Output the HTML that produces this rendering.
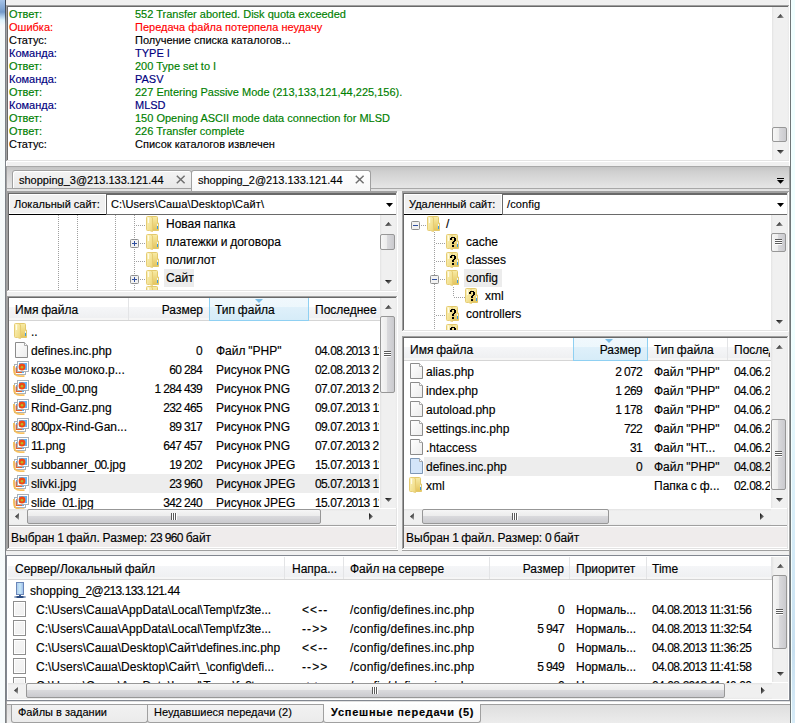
<!DOCTYPE html><html><head><meta charset="utf-8"><style>
html,body{margin:0;padding:0}
body{width:795px;height:723px;overflow:hidden;position:relative;background:#f0f0f0;font-family:"Liberation Sans",sans-serif}
body div,body svg{position:absolute}
.t{white-space:pre;-webkit-text-stroke:0.15px currentColor}
</style></head><body>
<svg style="left:0;top:0" width="0" height="0"><defs><linearGradient id="ga" x1="0" y1="0" x2="1" y2="1"><stop offset="0" stop-color="#000"/><stop offset="1" stop-color="#a8a8a8"/></linearGradient></defs></svg>
<svg style="left:0;top:0" width="0" height="0"><defs><linearGradient id="gfb" x1="0" y1="0" x2="0" y2="1"><stop offset="0" stop-color="#f8eca6"/><stop offset="1" stop-color="#e4c45c"/></linearGradient><linearGradient id="gff" x1="0" y1="0" x2="1" y2="1"><stop offset="0" stop-color="#fbf4c0"/><stop offset="1" stop-color="#eed678"/></linearGradient><linearGradient id="gfile" x1="0" y1="0" x2="1" y2="1"><stop offset="0" stop-color="#ffffff"/><stop offset="1" stop-color="#ececec"/></linearGradient></defs></svg>
<div style="left:0px;top:0px;width:5px;height:723px;background:linear-gradient(#a4c2e8 0px,#7299c9 12px,#a9c9e8 16px,#def4fb 20px,#f6fafa 26px,#f7fbfc 100%)"></div>
<div style="left:5px;top:0px;width:1px;height:723px;background:linear-gradient(#3c4656 0,#4a5462 16px,#7c8288 24px,#7e8286 100%)"></div>
<div style="left:789px;top:0px;width:1px;height:166px;background:#ffffff"></div>
<div style="left:789px;top:166px;width:1px;height:557px;background:#a0a0a0"></div>
<div style="left:6px;top:162px;width:1px;height:4px;background:#ffffff"></div>
<div style="left:790px;top:0px;width:1px;height:723px;background:#6e7678"></div>
<div style="left:791px;top:0px;width:1px;height:723px;background:#f4ffff"></div>
<div style="left:792px;top:0px;width:3px;height:723px;background:linear-gradient(#f0ffff 0,#f0ffff 330px,#d6ecf8 540px,#c8e0f0 650px,#d8ecf8 100%)"></div>
<div style="left:8px;top:7px;width:780px;height:153px;background:#fff"></div>
<div style="left:6px;top:5px;width:784px;height:1px;background:#a0a0a0"></div>
<div style="left:6px;top:5px;width:1px;height:157px;background:#a0a0a0"></div>
<div style="left:7px;top:6px;width:782px;height:1px;background:#696969"></div>
<div style="left:7px;top:6px;width:1px;height:155px;background:#696969"></div>
<div style="left:6px;top:161px;width:784px;height:1px;background:#ffffff"></div>
<div style="left:789px;top:5px;width:1px;height:157px;background:#ffffff"></div>
<div style="left:7px;top:160px;width:782px;height:1px;background:#e3e3e3"></div>
<div style="left:788px;top:6px;width:1px;height:155px;background:#e3e3e3"></div>
<div style="left:772px;top:7px;width:17px;height:153px;background:linear-gradient(90deg,#e3e3e3,#f0f0f0 2px,#f0f0f0 calc(100% - 2px),#eaeaea)"></div>
<svg style="left:777px;top:14px" width="7" height="4" viewBox="0 0 7 4"><path d="M0 4L3.5 0L7 4Z" fill="url(#ga)"/></svg>
<svg style="left:777px;top:150px" width="7" height="4" viewBox="0 0 7 4"><path d="M0 0L3.5 4L7 0Z" fill="url(#ga)"/></svg>
<div style="left:772px;top:127px;width:15px;height:15px;background:linear-gradient(90deg,#f6f6f6 0,#ebebeb 50%,#d9d9dc 50%,#cacace 100%);border:1px solid #979797;border-radius:2px;box-sizing:border-box"></div>
<div class="t" style="left:9px;top:8px;font-size:11px;line-height:13px;color:#008000;">Ответ:</div>
<div class="t" style="left:135px;top:8px;font-size:11px;line-height:13px;color:#008000;">552 Transfer aborted. Disk quota exceeded</div>
<div class="t" style="left:9px;top:21px;font-size:11px;line-height:13px;color:#ff0000;">Ошибка:</div>
<div class="t" style="left:135px;top:21px;font-size:11px;line-height:13px;color:#ff0000;">Передача файла потерпела неудачу</div>
<div class="t" style="left:9px;top:34px;font-size:11px;line-height:13px;color:#000000;">Статус:</div>
<div class="t" style="left:135px;top:34px;font-size:11px;line-height:13px;color:#000000;">Получение списка каталогов...</div>
<div class="t" style="left:9px;top:47px;font-size:11px;line-height:13px;color:#000080;">Команда:</div>
<div class="t" style="left:135px;top:47px;font-size:11px;line-height:13px;color:#000080;">TYPE I</div>
<div class="t" style="left:9px;top:60px;font-size:11px;line-height:13px;color:#008000;">Ответ:</div>
<div class="t" style="left:135px;top:60px;font-size:11px;line-height:13px;color:#008000;">200 Type set to I</div>
<div class="t" style="left:9px;top:73px;font-size:11px;line-height:13px;color:#000080;">Команда:</div>
<div class="t" style="left:135px;top:73px;font-size:11px;line-height:13px;color:#000080;">PASV</div>
<div class="t" style="left:9px;top:86px;font-size:11px;line-height:13px;color:#008000;">Ответ:</div>
<div class="t" style="left:135px;top:86px;font-size:11px;line-height:13px;color:#008000;">227 Entering Passive Mode (213,133,121,44,225,156).</div>
<div class="t" style="left:9px;top:99px;font-size:11px;line-height:13px;color:#000080;">Команда:</div>
<div class="t" style="left:135px;top:99px;font-size:11px;line-height:13px;color:#000080;">MLSD</div>
<div class="t" style="left:9px;top:112px;font-size:11px;line-height:13px;color:#008000;">Ответ:</div>
<div class="t" style="left:135px;top:112px;font-size:11px;line-height:13px;color:#008000;">150 Opening ASCII mode data connection for MLSD</div>
<div class="t" style="left:9px;top:125px;font-size:11px;line-height:13px;color:#008000;">Ответ:</div>
<div class="t" style="left:135px;top:125px;font-size:11px;line-height:13px;color:#008000;">226 Transfer complete</div>
<div class="t" style="left:9px;top:138px;font-size:11px;line-height:13px;color:#000000;">Статус:</div>
<div class="t" style="left:135px;top:138px;font-size:11px;line-height:13px;color:#000000;">Список каталогов извлечен</div>
<div style="left:6px;top:166px;width:784px;height:1px;background:#a8a8a8"></div>
<div style="left:6px;top:167px;width:783px;height:21px;background:linear-gradient(#c4c4c4,#d0d0d0 5px,#e6e6e6 100%)"></div>
<div style="left:6px;top:166px;width:1px;height:25px;background:#a0a0a0"></div>
<div style="left:7px;top:188px;width:782px;height:1px;background:#a8a8a8"></div>
<div style="left:7px;top:189px;width:782px;height:2px;background:#e2e2e2"></div>
<div style="left:12px;top:170px;width:180px;height:19px;background:linear-gradient(#f4f4f4,#e8e8e8);border:1px solid #a0a0a0;border-radius:3px 3px 0 0;box-sizing:border-box;box-shadow:inset 1px 1px 0 #fff"></div>
<div class="t" style="left:19px;top:174px;font-size:11px;line-height:13px;color:#000;">shopping_3@213.133.121.44</div>
<div style="left:191px;top:170px;width:180px;height:21px;background:linear-gradient(#ffffff,#f8f8f8);border:1px solid #a0a0a0;border-bottom:none;border-radius:3px 3px 0 0;box-sizing:border-box"></div>
<div class="t" style="left:198px;top:174px;font-size:11px;line-height:13px;color:#000;">shopping_2@213.133.121.44</div>
<svg style="left:176px;top:175px" width="10" height="9" viewBox="0 0 10 9"><path d="M0.8 0.8L8.6 8.2M8.6 0.8L0.8 8.2" stroke="#707070" stroke-width="1.5"/></svg>
<svg style="left:355px;top:175px" width="10" height="9" viewBox="0 0 10 9"><path d="M0.8 0.8L8.6 8.2M8.6 0.8L0.8 8.2" stroke="#707070" stroke-width="1.5"/></svg>
<svg style="left:777px;top:178px" width="7" height="7" viewBox="0 0 7 7"><path d="M0 0.5H7" stroke="#000" stroke-width="1"/><path d="M0 2H7L3.5 5.8Z" fill="#000"/></svg>
<div style="left:6px;top:191px;width:1px;height:360px;background:#a0a0a0"></div>
<div style="left:6px;top:191px;width:391px;height:1px;background:#a0a0a0"></div>
<div style="left:6px;top:550px;width:392px;height:1px;background:#a0a0a0"></div>
<div style="left:9px;top:194px;width:387px;height:96px;background:#fff"></div>
<div style="left:7px;top:192px;width:391px;height:1px;background:#a0a0a0"></div>
<div style="left:7px;top:192px;width:1px;height:100px;background:#a0a0a0"></div>
<div style="left:8px;top:193px;width:389px;height:1px;background:#696969"></div>
<div style="left:8px;top:193px;width:1px;height:98px;background:#696969"></div>
<div style="left:7px;top:291px;width:391px;height:1px;background:#ffffff"></div>
<div style="left:397px;top:192px;width:1px;height:100px;background:#ffffff"></div>
<div style="left:8px;top:290px;width:389px;height:1px;background:#e3e3e3"></div>
<div style="left:396px;top:193px;width:1px;height:98px;background:#e3e3e3"></div>
<div style="left:9px;top:194px;width:97px;height:20px;background:#f0f0f0;box-shadow:inset 1px 1px 0 #fff,inset -1px -1px 0 #fff"></div>
<div style="left:106px;top:194px;width:1px;height:21px;background:#696969"></div>
<div style="left:9px;top:214px;width:97px;height:1px;background:#000"></div>
<div class="t" style="left:14px;top:198px;font-size:11px;line-height:13px;color:#000;">Локальный сайт:</div>
<div style="left:107px;top:194px;width:289px;height:1px;background:#696969"></div>
<div style="left:107px;top:195px;width:289px;height:19px;background:#fff"></div>
<div style="left:107px;top:214px;width:289px;height:1px;background:#6a6a6a"></div>
<div class="t" style="left:111px;top:198px;font-size:11px;line-height:13px;color:#000;letter-spacing:0.12px;">C:\Users\Саша\Desktop\Сайт\</div>
<svg style="left:386px;top:203px" width="7" height="4" viewBox="0 0 7 4"><path d="M0 0H7L3.5 4Z" fill="#000"/></svg>
<div style="left:58px;top:215px;width:1px;height:75px;background:repeating-linear-gradient(#a0a0a0 0 1px,transparent 1px 2px)"></div>
<div style="left:77px;top:215px;width:1px;height:75px;background:repeating-linear-gradient(#a0a0a0 0 1px,transparent 1px 2px)"></div>
<div style="left:115px;top:215px;width:1px;height:75px;background:repeating-linear-gradient(#a0a0a0 0 1px,transparent 1px 2px)"></div>
<div style="left:134px;top:215px;width:1px;height:75px;background:repeating-linear-gradient(#a0a0a0 0 1px,transparent 1px 2px)"></div>
<div style="left:136px;top:225px;width:10px;height:1px;background:repeating-linear-gradient(90deg,#a0a0a0 0 1px,transparent 1px 2px)"></div>
<svg style="left:146px;top:216px" width="14" height="16" viewBox="0 0 14 16"><path d="M5 0.5H10.5Q11.5 0.5 11.5 1.5V7H12.5V14.5H6Z" fill="url(#gfb)" stroke="#e2c86c" stroke-width="1"/><path d="M0.5 1.5Q0.5 0.5 1.5 0.5H5L6.5 2V15.5L3.5 14.5H1.5Q0.5 14.5 0.5 13.5Z" fill="url(#gff)" stroke="#e6cc74" stroke-width="1"/><path d="M2.5 1.5V7" stroke="#fffbe8" stroke-width="1.2"/><rect x="11" y="8" width="1" height="2" fill="#eef4fa"/><rect x="11" y="10" width="1" height="3" fill="#3c9ae0"/></svg>
<div class="t" style="left:166px;top:216px;font-size:12px;line-height:16px;color:#000;">Новая<span style="letter-spacing:-0.5px"> </span>папка</div>
<div style="left:136px;top:243px;width:10px;height:1px;background:repeating-linear-gradient(90deg,#a0a0a0 0 1px,transparent 1px 2px)"></div>
<svg style="left:130px;top:239px" width="9" height="9" viewBox="0 0 9 9"><rect x="0.5" y="0.5" width="8" height="8" rx="1" fill="#f2f2f2" stroke="#8e8f8f" stroke-width="1"/><path d="M2 4.5H7" stroke="#2f4f9f" stroke-width="1"/><path d="M4.5 2V7" stroke="#2f4f9f" stroke-width="1"/></svg>
<svg style="left:146px;top:234px" width="14" height="16" viewBox="0 0 14 16"><path d="M5 0.5H10.5Q11.5 0.5 11.5 1.5V7H12.5V14.5H6Z" fill="url(#gfb)" stroke="#e2c86c" stroke-width="1"/><path d="M0.5 1.5Q0.5 0.5 1.5 0.5H5L6.5 2V15.5L3.5 14.5H1.5Q0.5 14.5 0.5 13.5Z" fill="url(#gff)" stroke="#e6cc74" stroke-width="1"/><path d="M2.5 1.5V7" stroke="#fffbe8" stroke-width="1.2"/><rect x="11" y="8" width="1" height="2" fill="#eef4fa"/><rect x="11" y="10" width="1" height="3" fill="#3c9ae0"/></svg>
<div class="t" style="left:166px;top:234px;font-size:12px;line-height:16px;color:#000;">платежки<span style="letter-spacing:-0.5px"> </span>и<span style="letter-spacing:-0.5px"> </span>договора</div>
<div style="left:136px;top:261px;width:10px;height:1px;background:repeating-linear-gradient(90deg,#a0a0a0 0 1px,transparent 1px 2px)"></div>
<svg style="left:146px;top:252px" width="14" height="16" viewBox="0 0 14 16"><path d="M5 0.5H10.5Q11.5 0.5 11.5 1.5V7H12.5V14.5H6Z" fill="url(#gfb)" stroke="#e2c86c" stroke-width="1"/><path d="M0.5 1.5Q0.5 0.5 1.5 0.5H5L6.5 2V15.5L3.5 14.5H1.5Q0.5 14.5 0.5 13.5Z" fill="url(#gff)" stroke="#e6cc74" stroke-width="1"/><path d="M2.5 1.5V7" stroke="#fffbe8" stroke-width="1.2"/><rect x="11" y="8" width="1" height="2" fill="#eef4fa"/><rect x="11" y="10" width="1" height="3" fill="#3c9ae0"/></svg>
<div class="t" style="left:166px;top:252px;font-size:12px;line-height:16px;color:#000;">полиглот</div>
<div style="left:136px;top:279px;width:10px;height:1px;background:repeating-linear-gradient(90deg,#a0a0a0 0 1px,transparent 1px 2px)"></div>
<svg style="left:130px;top:275px" width="9" height="9" viewBox="0 0 9 9"><rect x="0.5" y="0.5" width="8" height="8" rx="1" fill="#f2f2f2" stroke="#8e8f8f" stroke-width="1"/><path d="M2 4.5H7" stroke="#2f4f9f" stroke-width="1"/><path d="M4.5 2V7" stroke="#2f4f9f" stroke-width="1"/></svg>
<div style="left:164px;top:269px;width:30px;height:18px;background:#ececec"></div>
<svg style="left:146px;top:270px" width="14" height="16" viewBox="0 0 14 16"><path d="M5 0.5H10.5Q11.5 0.5 11.5 1.5V7H12.5V14.5H6Z" fill="url(#gfb)" stroke="#e2c86c" stroke-width="1"/><path d="M0.5 1.5Q0.5 0.5 1.5 0.5H5L6.5 2V15.5L3.5 14.5H1.5Q0.5 14.5 0.5 13.5Z" fill="url(#gff)" stroke="#e6cc74" stroke-width="1"/><path d="M2.5 1.5V7" stroke="#fffbe8" stroke-width="1.2"/><rect x="11" y="8" width="1" height="2" fill="#eef4fa"/><rect x="11" y="10" width="1" height="3" fill="#3c9ae0"/></svg>
<div class="t" style="left:166px;top:270px;font-size:12px;line-height:16px;color:#000;">Сайт</div>
<div style="left:0px;top:0px;width:795px;height:290px;overflow:hidden">
<svg style="left:146px;top:286px" width="14" height="16" viewBox="0 0 14 16"><path d="M5 0.5H10.5Q11.5 0.5 11.5 1.5V7H12.5V14.5H6Z" fill="url(#gfb)" stroke="#e2c86c" stroke-width="1"/><path d="M0.5 1.5Q0.5 0.5 1.5 0.5H5L6.5 2V15.5L3.5 14.5H1.5Q0.5 14.5 0.5 13.5Z" fill="url(#gff)" stroke="#e6cc74" stroke-width="1"/><path d="M2.5 1.5V7" stroke="#fffbe8" stroke-width="1.2"/><rect x="11" y="8" width="1" height="2" fill="#eef4fa"/><rect x="11" y="10" width="1" height="3" fill="#3c9ae0"/></svg>
</div>
<div style="left:9px;top:290px;width:387px;height:1px;background:#e3e3e3"></div>
<div style="left:380px;top:215px;width:17px;height:75px;background:linear-gradient(90deg,#e3e3e3,#f0f0f0 2px,#f0f0f0 calc(100% - 2px),#eaeaea)"></div>
<svg style="left:385px;top:222px" width="7" height="4" viewBox="0 0 7 4"><path d="M0 4L3.5 0L7 4Z" fill="url(#ga)"/></svg>
<svg style="left:385px;top:280px" width="7" height="4" viewBox="0 0 7 4"><path d="M0 0L3.5 4L7 0Z" fill="url(#ga)"/></svg>
<div style="left:380px;top:234px;width:15px;height:16px;background:linear-gradient(90deg,#f6f6f6 0,#ebebeb 50%,#d9d9dc 50%,#cacace 100%);border:1px solid #979797;border-radius:2px;box-sizing:border-box"></div>
<div style="left:7px;top:292px;width:391px;height:4px;background:#f0f0f0"></div>
<div style="left:9px;top:298px;width:387px;height:250px;background:#fff"></div>
<div style="left:7px;top:296px;width:391px;height:1px;background:#a0a0a0"></div>
<div style="left:7px;top:296px;width:1px;height:254px;background:#a0a0a0"></div>
<div style="left:8px;top:297px;width:389px;height:1px;background:#696969"></div>
<div style="left:8px;top:297px;width:1px;height:252px;background:#696969"></div>
<div style="left:7px;top:549px;width:391px;height:1px;background:#ffffff"></div>
<div style="left:397px;top:296px;width:1px;height:254px;background:#ffffff"></div>
<div style="left:8px;top:548px;width:389px;height:1px;background:#e3e3e3"></div>
<div style="left:396px;top:297px;width:1px;height:252px;background:#e3e3e3"></div>
<div style="left:9px;top:298px;width:371px;height:23px;background:linear-gradient(#ffffff 0,#ffffff 9px,#f5f6f8 9px,#eff0f2 calc(100% - 2px),#f6f6f6 calc(100% - 2px));border-bottom:1px solid #d5d5d5;box-sizing:border-box"></div>
<div style="left:209px;top:298px;width:100px;height:23px;background:linear-gradient(#f0f8fd 0,#edf7fc 9px,#dff0fa 9px,#d6ecf8 100%);border:1px solid #8fd0f2;border-top:none;box-sizing:border-box"></div>
<div style="left:128px;top:298px;width:1px;height:22px;background:#e3e4e6"></div>
<svg style="left:255px;top:299px" width="8" height="4" viewBox="0 0 8 4"><path d="M0 0H8L4 4Z" fill="#7cbde6"/></svg>
<div class="t" style="left:15px;top:302px;font-size:12px;line-height:16px;color:#000;">Имя<span style="letter-spacing:-0.5px"> </span>файла</div>
<div class="t" style="left:-97px;width:300px;text-align:right;top:302px;font-size:12px;line-height:16px;color:#000;">Размер</div>
<div class="t" style="left:215px;top:302px;font-size:12px;line-height:16px;color:#000;">Тип<span style="letter-spacing:-0.5px"> </span>файла</div>
<div class="t" style="left:315px;top:302px;font-size:12px;line-height:16px;color:#000;width:64px;overflow:hidden;">Последнее</div>
<svg style="left:14px;top:323px" width="14" height="16" viewBox="0 0 14 16"><path d="M5 0.5H10.5Q11.5 0.5 11.5 1.5V7H12.5V14.5H6Z" fill="url(#gfb)" stroke="#e2c86c" stroke-width="1"/><path d="M0.5 1.5Q0.5 0.5 1.5 0.5H5L6.5 2V15.5L3.5 14.5H1.5Q0.5 14.5 0.5 13.5Z" fill="url(#gff)" stroke="#e6cc74" stroke-width="1"/><path d="M2.5 1.5V7" stroke="#fffbe8" stroke-width="1.2"/><rect x="11" y="8" width="1" height="2" fill="#eef4fa"/><rect x="11" y="10" width="1" height="3" fill="#3c9ae0"/></svg>
<div class="t" style="left:31px;top:324px;font-size:12px;line-height:16px;color:#000;">..</div>
<svg style="left:15px;top:342px" width="13" height="16" viewBox="0 0 13 16"><path d="M0.5 0.5H9.5L12.5 3.5V15.5H0.5Z" fill="url(#gfile)" stroke="#8c8c8c" stroke-width="1"/><path d="M9.5 0.5V3.5H12.5" fill="#fff" stroke="#a8a8a8" stroke-width="1"/></svg>
<div class="t" style="left:31px;top:343px;font-size:12px;line-height:16px;color:#000;">defines.inc.php</div>
<div class="t" style="left:-98px;width:300px;text-align:right;top:343px;font-size:12px;line-height:16px;color:#000;"><span style="letter-spacing:-0.7px">0</span></div>
<div class="t" style="left:216px;top:343px;font-size:12px;line-height:16px;color:#000;">Файл<span style="letter-spacing:-0.5px"> </span>"PHP"</div>
<div class="t" style="left:315px;top:343px;font-size:12px;line-height:16px;color:#000;width:64px;overflow:hidden;"><span style="letter-spacing:-0.7px">0</span><span style="letter-spacing:-0.7px">4</span>.<span style="letter-spacing:-0.7px">0</span><span style="letter-spacing:-0.7px">8</span>.<span style="letter-spacing:-0.7px">2</span><span style="letter-spacing:-0.7px">0</span><span style="letter-spacing:-0.7px">1</span><span style="letter-spacing:-0.7px">3</span><span style="letter-spacing:-0.5px"> </span><span style="letter-spacing:-0.7px">1</span><span style="letter-spacing:-0.7px">1</span>:<span style="letter-spacing:-0.7px">3</span><span style="letter-spacing:-0.7px">1</span></div>
<svg style="left:13px;top:361px" width="16" height="17" viewBox="0 0 16 17"><rect x="1.5" y="3.5" width="11" height="10" fill="#fff" stroke="#aab1b8" stroke-width="1"/><rect x="3" y="5" width="8" height="7" fill="#5caaf0"/><path d="M3.2 6.5V11.5H9" fill="none" stroke="#e8602a" stroke-width="1.2"/><rect x="4.5" y="0.5" width="11" height="10" fill="#fff" stroke="#aab1b8" stroke-width="1"/><rect x="6" y="2" width="8" height="7" fill="#66b2f4"/><circle cx="9" cy="6" r="3.4" fill="#f04a14"/><circle cx="9" cy="6.3" r="1.3" fill="#b8b828"/><path d="M0.9 5V9Q0.9 15.1 7 15.1H11.5" fill="none" stroke="#f8bb50" stroke-width="1.8" opacity="0.9"/></svg>
<div class="t" style="left:31px;top:362px;font-size:12px;line-height:16px;color:#000;">козье<span style="letter-spacing:-0.5px"> </span>молоко.p...</div>
<div class="t" style="left:-98px;width:300px;text-align:right;top:362px;font-size:12px;line-height:16px;color:#000;"><span style="letter-spacing:-0.7px">6</span><span style="letter-spacing:-0.7px">0</span><span style="letter-spacing:-0.5px"> </span><span style="letter-spacing:-0.7px">2</span><span style="letter-spacing:-0.7px">8</span><span style="letter-spacing:-0.7px">4</span></div>
<div class="t" style="left:216px;top:362px;font-size:12px;line-height:16px;color:#000;">Рисунок<span style="letter-spacing:-0.5px"> </span>PNG</div>
<div class="t" style="left:315px;top:362px;font-size:12px;line-height:16px;color:#000;width:64px;overflow:hidden;"><span style="letter-spacing:-0.7px">0</span><span style="letter-spacing:-0.7px">2</span>.<span style="letter-spacing:-0.7px">0</span><span style="letter-spacing:-0.7px">8</span>.<span style="letter-spacing:-0.7px">2</span><span style="letter-spacing:-0.7px">0</span><span style="letter-spacing:-0.7px">1</span><span style="letter-spacing:-0.7px">3</span><span style="letter-spacing:-0.5px"> </span><span style="letter-spacing:-0.7px">2</span><span style="letter-spacing:-0.7px">1</span>:<span style="letter-spacing:-0.7px">3</span><span style="letter-spacing:-0.7px">1</span></div>
<svg style="left:13px;top:380px" width="16" height="17" viewBox="0 0 16 17"><rect x="1.5" y="3.5" width="11" height="10" fill="#fff" stroke="#aab1b8" stroke-width="1"/><rect x="3" y="5" width="8" height="7" fill="#5caaf0"/><path d="M3.2 6.5V11.5H9" fill="none" stroke="#e8602a" stroke-width="1.2"/><rect x="4.5" y="0.5" width="11" height="10" fill="#fff" stroke="#aab1b8" stroke-width="1"/><rect x="6" y="2" width="8" height="7" fill="#66b2f4"/><circle cx="9" cy="6" r="3.4" fill="#f04a14"/><circle cx="9" cy="6.3" r="1.3" fill="#b8b828"/><path d="M0.9 5V9Q0.9 15.1 7 15.1H11.5" fill="none" stroke="#f8bb50" stroke-width="1.8" opacity="0.9"/></svg>
<div class="t" style="left:31px;top:381px;font-size:12px;line-height:16px;color:#000;">slide_<span style="letter-spacing:-0.7px">0</span><span style="letter-spacing:-0.7px">0</span>.png</div>
<div class="t" style="left:-98px;width:300px;text-align:right;top:381px;font-size:12px;line-height:16px;color:#000;"><span style="letter-spacing:-0.7px">1</span><span style="letter-spacing:-0.5px"> </span><span style="letter-spacing:-0.7px">2</span><span style="letter-spacing:-0.7px">8</span><span style="letter-spacing:-0.7px">4</span><span style="letter-spacing:-0.5px"> </span><span style="letter-spacing:-0.7px">4</span><span style="letter-spacing:-0.7px">3</span><span style="letter-spacing:-0.7px">9</span></div>
<div class="t" style="left:216px;top:381px;font-size:12px;line-height:16px;color:#000;">Рисунок<span style="letter-spacing:-0.5px"> </span>PNG</div>
<div class="t" style="left:315px;top:381px;font-size:12px;line-height:16px;color:#000;width:64px;overflow:hidden;"><span style="letter-spacing:-0.7px">0</span><span style="letter-spacing:-0.7px">7</span>.<span style="letter-spacing:-0.7px">0</span><span style="letter-spacing:-0.7px">7</span>.<span style="letter-spacing:-0.7px">2</span><span style="letter-spacing:-0.7px">0</span><span style="letter-spacing:-0.7px">1</span><span style="letter-spacing:-0.7px">3</span><span style="letter-spacing:-0.5px"> </span><span style="letter-spacing:-0.7px">2</span><span style="letter-spacing:-0.7px">1</span>:<span style="letter-spacing:-0.7px">3</span><span style="letter-spacing:-0.7px">1</span></div>
<svg style="left:13px;top:399px" width="16" height="17" viewBox="0 0 16 17"><rect x="1.5" y="3.5" width="11" height="10" fill="#fff" stroke="#aab1b8" stroke-width="1"/><rect x="3" y="5" width="8" height="7" fill="#5caaf0"/><path d="M3.2 6.5V11.5H9" fill="none" stroke="#e8602a" stroke-width="1.2"/><rect x="4.5" y="0.5" width="11" height="10" fill="#fff" stroke="#aab1b8" stroke-width="1"/><rect x="6" y="2" width="8" height="7" fill="#66b2f4"/><circle cx="9" cy="6" r="3.4" fill="#f04a14"/><circle cx="9" cy="6.3" r="1.3" fill="#b8b828"/><path d="M0.9 5V9Q0.9 15.1 7 15.1H11.5" fill="none" stroke="#f8bb50" stroke-width="1.8" opacity="0.9"/></svg>
<div class="t" style="left:31px;top:400px;font-size:12px;line-height:16px;color:#000;">Rind-Ganz.png</div>
<div class="t" style="left:-98px;width:300px;text-align:right;top:400px;font-size:12px;line-height:16px;color:#000;"><span style="letter-spacing:-0.7px">2</span><span style="letter-spacing:-0.7px">3</span><span style="letter-spacing:-0.7px">2</span><span style="letter-spacing:-0.5px"> </span><span style="letter-spacing:-0.7px">4</span><span style="letter-spacing:-0.7px">6</span><span style="letter-spacing:-0.7px">5</span></div>
<div class="t" style="left:216px;top:400px;font-size:12px;line-height:16px;color:#000;">Рисунок<span style="letter-spacing:-0.5px"> </span>PNG</div>
<div class="t" style="left:315px;top:400px;font-size:12px;line-height:16px;color:#000;width:64px;overflow:hidden;"><span style="letter-spacing:-0.7px">0</span><span style="letter-spacing:-0.7px">9</span>.<span style="letter-spacing:-0.7px">0</span><span style="letter-spacing:-0.7px">7</span>.<span style="letter-spacing:-0.7px">2</span><span style="letter-spacing:-0.7px">0</span><span style="letter-spacing:-0.7px">1</span><span style="letter-spacing:-0.7px">3</span><span style="letter-spacing:-0.5px"> </span><span style="letter-spacing:-0.7px">1</span><span style="letter-spacing:-0.7px">1</span>:<span style="letter-spacing:-0.7px">3</span><span style="letter-spacing:-0.7px">1</span></div>
<svg style="left:13px;top:418px" width="16" height="17" viewBox="0 0 16 17"><rect x="1.5" y="3.5" width="11" height="10" fill="#fff" stroke="#aab1b8" stroke-width="1"/><rect x="3" y="5" width="8" height="7" fill="#5caaf0"/><path d="M3.2 6.5V11.5H9" fill="none" stroke="#e8602a" stroke-width="1.2"/><rect x="4.5" y="0.5" width="11" height="10" fill="#fff" stroke="#aab1b8" stroke-width="1"/><rect x="6" y="2" width="8" height="7" fill="#66b2f4"/><circle cx="9" cy="6" r="3.4" fill="#f04a14"/><circle cx="9" cy="6.3" r="1.3" fill="#b8b828"/><path d="M0.9 5V9Q0.9 15.1 7 15.1H11.5" fill="none" stroke="#f8bb50" stroke-width="1.8" opacity="0.9"/></svg>
<div class="t" style="left:31px;top:419px;font-size:12px;line-height:16px;color:#000;"><span style="letter-spacing:-0.7px">8</span><span style="letter-spacing:-0.7px">0</span><span style="letter-spacing:-0.7px">0</span>px-Rind-Gan...</div>
<div class="t" style="left:-98px;width:300px;text-align:right;top:419px;font-size:12px;line-height:16px;color:#000;"><span style="letter-spacing:-0.7px">8</span><span style="letter-spacing:-0.7px">9</span><span style="letter-spacing:-0.5px"> </span><span style="letter-spacing:-0.7px">3</span><span style="letter-spacing:-0.7px">1</span><span style="letter-spacing:-0.7px">7</span></div>
<div class="t" style="left:216px;top:419px;font-size:12px;line-height:16px;color:#000;">Рисунок<span style="letter-spacing:-0.5px"> </span>PNG</div>
<div class="t" style="left:315px;top:419px;font-size:12px;line-height:16px;color:#000;width:64px;overflow:hidden;"><span style="letter-spacing:-0.7px">0</span><span style="letter-spacing:-0.7px">9</span>.<span style="letter-spacing:-0.7px">0</span><span style="letter-spacing:-0.7px">7</span>.<span style="letter-spacing:-0.7px">2</span><span style="letter-spacing:-0.7px">0</span><span style="letter-spacing:-0.7px">1</span><span style="letter-spacing:-0.7px">3</span><span style="letter-spacing:-0.5px"> </span><span style="letter-spacing:-0.7px">1</span><span style="letter-spacing:-0.7px">1</span>:<span style="letter-spacing:-0.7px">3</span><span style="letter-spacing:-0.7px">1</span></div>
<svg style="left:13px;top:437px" width="16" height="17" viewBox="0 0 16 17"><rect x="1.5" y="3.5" width="11" height="10" fill="#fff" stroke="#aab1b8" stroke-width="1"/><rect x="3" y="5" width="8" height="7" fill="#5caaf0"/><path d="M3.2 6.5V11.5H9" fill="none" stroke="#e8602a" stroke-width="1.2"/><rect x="4.5" y="0.5" width="11" height="10" fill="#fff" stroke="#aab1b8" stroke-width="1"/><rect x="6" y="2" width="8" height="7" fill="#66b2f4"/><circle cx="9" cy="6" r="3.4" fill="#f04a14"/><circle cx="9" cy="6.3" r="1.3" fill="#b8b828"/><path d="M0.9 5V9Q0.9 15.1 7 15.1H11.5" fill="none" stroke="#f8bb50" stroke-width="1.8" opacity="0.9"/></svg>
<div class="t" style="left:31px;top:438px;font-size:12px;line-height:16px;color:#000;"><span style="letter-spacing:-0.7px">1</span><span style="letter-spacing:-0.7px">1</span>.png</div>
<div class="t" style="left:-98px;width:300px;text-align:right;top:438px;font-size:12px;line-height:16px;color:#000;"><span style="letter-spacing:-0.7px">6</span><span style="letter-spacing:-0.7px">4</span><span style="letter-spacing:-0.7px">7</span><span style="letter-spacing:-0.5px"> </span><span style="letter-spacing:-0.7px">4</span><span style="letter-spacing:-0.7px">5</span><span style="letter-spacing:-0.7px">7</span></div>
<div class="t" style="left:216px;top:438px;font-size:12px;line-height:16px;color:#000;">Рисунок<span style="letter-spacing:-0.5px"> </span>PNG</div>
<div class="t" style="left:315px;top:438px;font-size:12px;line-height:16px;color:#000;width:64px;overflow:hidden;"><span style="letter-spacing:-0.7px">0</span><span style="letter-spacing:-0.7px">7</span>.<span style="letter-spacing:-0.7px">0</span><span style="letter-spacing:-0.7px">7</span>.<span style="letter-spacing:-0.7px">2</span><span style="letter-spacing:-0.7px">0</span><span style="letter-spacing:-0.7px">1</span><span style="letter-spacing:-0.7px">3</span><span style="letter-spacing:-0.5px"> </span><span style="letter-spacing:-0.7px">2</span><span style="letter-spacing:-0.7px">1</span>:<span style="letter-spacing:-0.7px">3</span><span style="letter-spacing:-0.7px">1</span></div>
<svg style="left:13px;top:456px" width="16" height="17" viewBox="0 0 16 17"><rect x="1.5" y="3.5" width="11" height="10" fill="#fff" stroke="#aab1b8" stroke-width="1"/><rect x="3" y="5" width="8" height="7" fill="#5caaf0"/><path d="M3.2 6.5V11.5H9" fill="none" stroke="#e8602a" stroke-width="1.2"/><rect x="4.5" y="0.5" width="11" height="10" fill="#fff" stroke="#aab1b8" stroke-width="1"/><rect x="6" y="2" width="8" height="7" fill="#66b2f4"/><circle cx="9" cy="6" r="3.4" fill="#f04a14"/><circle cx="9" cy="6.3" r="1.3" fill="#b8b828"/><path d="M0.9 5V9Q0.9 15.1 7 15.1H11.5" fill="none" stroke="#f8bb50" stroke-width="1.8" opacity="0.9"/></svg>
<div class="t" style="left:31px;top:457px;font-size:12px;line-height:16px;color:#000;">subbanner_<span style="letter-spacing:-0.7px">0</span><span style="letter-spacing:-0.7px">0</span>.jpg</div>
<div class="t" style="left:-98px;width:300px;text-align:right;top:457px;font-size:12px;line-height:16px;color:#000;"><span style="letter-spacing:-0.7px">1</span><span style="letter-spacing:-0.7px">9</span><span style="letter-spacing:-0.5px"> </span><span style="letter-spacing:-0.7px">2</span><span style="letter-spacing:-0.7px">0</span><span style="letter-spacing:-0.7px">2</span></div>
<div class="t" style="left:216px;top:457px;font-size:12px;line-height:16px;color:#000;">Рисунок<span style="letter-spacing:-0.5px"> </span>JPEG</div>
<div class="t" style="left:315px;top:457px;font-size:12px;line-height:16px;color:#000;width:64px;overflow:hidden;"><span style="letter-spacing:-0.7px">1</span><span style="letter-spacing:-0.7px">5</span>.<span style="letter-spacing:-0.7px">0</span><span style="letter-spacing:-0.7px">7</span>.<span style="letter-spacing:-0.7px">2</span><span style="letter-spacing:-0.7px">0</span><span style="letter-spacing:-0.7px">1</span><span style="letter-spacing:-0.7px">3</span><span style="letter-spacing:-0.5px"> </span><span style="letter-spacing:-0.7px">1</span><span style="letter-spacing:-0.7px">1</span>:<span style="letter-spacing:-0.7px">3</span><span style="letter-spacing:-0.7px">1</span></div>
<div style="left:29px;top:474px;width:350px;height:19px;background:#ededed"></div>
<svg style="left:13px;top:475px" width="16" height="17" viewBox="0 0 16 17"><rect x="1.5" y="3.5" width="11" height="10" fill="#fff" stroke="#aab1b8" stroke-width="1"/><rect x="3" y="5" width="8" height="7" fill="#5caaf0"/><path d="M3.2 6.5V11.5H9" fill="none" stroke="#e8602a" stroke-width="1.2"/><rect x="4.5" y="0.5" width="11" height="10" fill="#fff" stroke="#aab1b8" stroke-width="1"/><rect x="6" y="2" width="8" height="7" fill="#66b2f4"/><circle cx="9" cy="6" r="3.4" fill="#f04a14"/><circle cx="9" cy="6.3" r="1.3" fill="#b8b828"/><path d="M0.9 5V9Q0.9 15.1 7 15.1H11.5" fill="none" stroke="#f8bb50" stroke-width="1.8" opacity="0.9"/></svg>
<div class="t" style="left:31px;top:476px;font-size:12px;line-height:16px;color:#000;">slivki.jpg</div>
<div class="t" style="left:-98px;width:300px;text-align:right;top:476px;font-size:12px;line-height:16px;color:#000;"><span style="letter-spacing:-0.7px">2</span><span style="letter-spacing:-0.7px">3</span><span style="letter-spacing:-0.5px"> </span><span style="letter-spacing:-0.7px">9</span><span style="letter-spacing:-0.7px">6</span><span style="letter-spacing:-0.7px">0</span></div>
<div class="t" style="left:216px;top:476px;font-size:12px;line-height:16px;color:#000;">Рисунок<span style="letter-spacing:-0.5px"> </span>JPEG</div>
<div class="t" style="left:315px;top:476px;font-size:12px;line-height:16px;color:#000;width:64px;overflow:hidden;"><span style="letter-spacing:-0.7px">0</span><span style="letter-spacing:-0.7px">5</span>.<span style="letter-spacing:-0.7px">0</span><span style="letter-spacing:-0.7px">7</span>.<span style="letter-spacing:-0.7px">2</span><span style="letter-spacing:-0.7px">0</span><span style="letter-spacing:-0.7px">1</span><span style="letter-spacing:-0.7px">3</span><span style="letter-spacing:-0.5px"> </span><span style="letter-spacing:-0.7px">1</span><span style="letter-spacing:-0.7px">7</span>:<span style="letter-spacing:-0.7px">3</span><span style="letter-spacing:-0.7px">1</span></div>
<svg style="left:13px;top:494px" width="16" height="17" viewBox="0 0 16 17"><rect x="1.5" y="3.5" width="11" height="10" fill="#fff" stroke="#aab1b8" stroke-width="1"/><rect x="3" y="5" width="8" height="7" fill="#5caaf0"/><path d="M3.2 6.5V11.5H9" fill="none" stroke="#e8602a" stroke-width="1.2"/><rect x="4.5" y="0.5" width="11" height="10" fill="#fff" stroke="#aab1b8" stroke-width="1"/><rect x="6" y="2" width="8" height="7" fill="#66b2f4"/><circle cx="9" cy="6" r="3.4" fill="#f04a14"/><circle cx="9" cy="6.3" r="1.3" fill="#b8b828"/><path d="M0.9 5V9Q0.9 15.1 7 15.1H11.5" fill="none" stroke="#f8bb50" stroke-width="1.8" opacity="0.9"/></svg>
<div class="t" style="left:31px;top:495px;font-size:12px;line-height:16px;color:#000;">slide_<span style="letter-spacing:-0.7px">0</span><span style="letter-spacing:-0.7px">1</span>.jpg</div>
<div class="t" style="left:-98px;width:300px;text-align:right;top:495px;font-size:12px;line-height:16px;color:#000;"><span style="letter-spacing:-0.7px">3</span><span style="letter-spacing:-0.7px">4</span><span style="letter-spacing:-0.7px">2</span><span style="letter-spacing:-0.5px"> </span><span style="letter-spacing:-0.7px">2</span><span style="letter-spacing:-0.7px">4</span><span style="letter-spacing:-0.7px">0</span></div>
<div class="t" style="left:216px;top:495px;font-size:12px;line-height:16px;color:#000;">Рисунок<span style="letter-spacing:-0.5px"> </span>JPEG</div>
<div class="t" style="left:315px;top:495px;font-size:12px;line-height:16px;color:#000;width:64px;overflow:hidden;"><span style="letter-spacing:-0.7px">1</span><span style="letter-spacing:-0.7px">5</span>.<span style="letter-spacing:-0.7px">0</span><span style="letter-spacing:-0.7px">7</span>.<span style="letter-spacing:-0.7px">2</span><span style="letter-spacing:-0.7px">0</span><span style="letter-spacing:-0.7px">1</span><span style="letter-spacing:-0.7px">3</span><span style="letter-spacing:-0.5px"> </span><span style="letter-spacing:-0.7px">1</span><span style="letter-spacing:-0.7px">1</span>:<span style="letter-spacing:-0.7px">3</span><span style="letter-spacing:-0.7px">1</span></div>
<div style="left:380px;top:298px;width:17px;height:210px;background:linear-gradient(90deg,#e3e3e3,#f0f0f0 2px,#f0f0f0 calc(100% - 2px),#eaeaea)"></div>
<svg style="left:385px;top:305px" width="7" height="4" viewBox="0 0 7 4"><path d="M0 4L3.5 0L7 4Z" fill="url(#ga)"/></svg>
<svg style="left:385px;top:498px" width="7" height="4" viewBox="0 0 7 4"><path d="M0 0L3.5 4L7 0Z" fill="url(#ga)"/></svg>
<div style="left:380px;top:316px;width:15px;height:77px;background:linear-gradient(90deg,#f6f6f6 0,#ebebeb 50%,#d9d9dc 50%,#cacace 100%);border:1px solid #979797;border-radius:2px;box-sizing:border-box"></div>
<svg style="left:383px;top:350px" width="9" height="8" viewBox="0 0 9 8"><path d="M1 1.5H8M1 3.5H8M1 5.5H8" stroke="#5a5a5a" stroke-width="1"/><path d="M1 2.5H8M1 4.5H8M1 6.5H8" stroke="#fff" stroke-width="1"/></svg>
<div style="left:9px;top:509px;width:371px;height:16px;background:linear-gradient(#e3e3e3,#f0f0f0 2px,#f0f0f0 14px,#eaeaea)"></div>
<svg style="left:15px;top:513px" width="4" height="7" viewBox="0 0 4 7"><path d="M4 0L0 3.5L4 7Z" fill="url(#ga)"/></svg>
<svg style="left:369px;top:513px" width="4" height="7" viewBox="0 0 4 7"><path d="M0 0L4 3.5L0 7Z" fill="url(#ga)"/></svg>
<div style="left:27px;top:509px;width:294px;height:15px;background:linear-gradient(#f6f6f6 0,#ebebeb 50%,#d9d9dc 50%,#cacace 100%);border:1px solid #979797;border-radius:2px;box-sizing:border-box"></div>
<svg style="left:170px;top:512px" width="8" height="9" viewBox="0 0 8 9"><path d="M1.5 1V8M3.5 1V8M5.5 1V8" stroke="#5a5a5a" stroke-width="1"/><path d="M2.5 1V8M4.5 1V8M6.5 1V8" stroke="#fff" stroke-width="1"/></svg>
<div style="left:380px;top:509px;width:16px;height:16px;background:#f0f0f0"></div>
<div style="left:9px;top:525px;width:387px;height:1px;background:#a0a0a0"></div>
<div style="left:9px;top:526px;width:387px;height:1px;background:#ffffff"></div>
<div style="left:9px;top:527px;width:387px;height:21px;background:#efecec"></div>
<div style="left:9px;top:547px;width:387px;height:1px;background:#ffffff"></div>
<div class="t" style="left:11px;top:530px;font-size:12px;line-height:16px;color:#000;">Выбран<span style="letter-spacing:-0.5px"> </span><span style="letter-spacing:-0.7px">1</span><span style="letter-spacing:-0.5px"> </span>файл.<span style="letter-spacing:-0.5px"> </span>Размер:<span style="letter-spacing:-0.5px"> </span><span style="letter-spacing:-0.7px">2</span><span style="letter-spacing:-0.7px">3</span><span style="letter-spacing:-0.5px"> </span><span style="letter-spacing:-0.7px">9</span><span style="letter-spacing:-0.7px">6</span><span style="letter-spacing:-0.7px">0</span><span style="letter-spacing:-0.5px"> </span>байт</div>
<div style="left:398px;top:191px;width:4px;height:360px;background:#f0f0f0"></div>
<div style="left:402px;top:191px;width:387px;height:1px;background:#a0a0a0"></div>
<div style="left:404px;top:194px;width:383px;height:136px;background:#fff"></div>
<div style="left:402px;top:192px;width:387px;height:1px;background:#a0a0a0"></div>
<div style="left:402px;top:192px;width:1px;height:140px;background:#a0a0a0"></div>
<div style="left:403px;top:193px;width:385px;height:1px;background:#696969"></div>
<div style="left:403px;top:193px;width:1px;height:138px;background:#696969"></div>
<div style="left:402px;top:331px;width:387px;height:1px;background:#ffffff"></div>
<div style="left:788px;top:192px;width:1px;height:140px;background:#ffffff"></div>
<div style="left:403px;top:330px;width:385px;height:1px;background:#e3e3e3"></div>
<div style="left:787px;top:193px;width:1px;height:138px;background:#e3e3e3"></div>
<div style="left:404px;top:194px;width:98px;height:20px;background:#f0f0f0;box-shadow:inset 1px 1px 0 #fff,inset -1px -1px 0 #fff"></div>
<div style="left:502px;top:194px;width:1px;height:21px;background:#696969"></div>
<div style="left:404px;top:214px;width:98px;height:1px;background:#000"></div>
<div class="t" style="left:409px;top:198px;font-size:11px;line-height:13px;color:#000;">Удаленный сайт:</div>
<div style="left:503px;top:194px;width:284px;height:1px;background:#696969"></div>
<div style="left:503px;top:195px;width:284px;height:19px;background:#fff"></div>
<div style="left:503px;top:214px;width:284px;height:1px;background:#6a6a6a"></div>
<div class="t" style="left:507px;top:198px;font-size:11px;line-height:13px;color:#000;letter-spacing:0.12px;">/config</div>
<svg style="left:777px;top:203px" width="7" height="4" viewBox="0 0 7 4"><path d="M0 0H7L3.5 4Z" fill="#000"/></svg>
<svg style="left:411px;top:221px" width="9" height="9" viewBox="0 0 9 9"><rect x="0.5" y="0.5" width="8" height="8" rx="1" fill="#f2f2f2" stroke="#8e8f8f" stroke-width="1"/><path d="M2 4.5H7" stroke="#2f4f9f" stroke-width="1"/></svg>
<div style="left:421px;top:225px;width:7px;height:1px;background:repeating-linear-gradient(90deg,#a0a0a0 0 1px,transparent 1px 2px)"></div>
<svg style="left:427px;top:216px" width="14" height="16" viewBox="0 0 14 16"><path d="M5 0.5H10.5Q11.5 0.5 11.5 1.5V7H12.5V14.5H6Z" fill="url(#gfb)" stroke="#e2c86c" stroke-width="1"/><path d="M0.5 1.5Q0.5 0.5 1.5 0.5H5L6.5 2V15.5L3.5 14.5H1.5Q0.5 14.5 0.5 13.5Z" fill="url(#gff)" stroke="#e6cc74" stroke-width="1"/><path d="M2.5 1.5V7" stroke="#fffbe8" stroke-width="1.2"/><rect x="11" y="8" width="1" height="2" fill="#eef4fa"/><rect x="11" y="10" width="1" height="3" fill="#3c9ae0"/></svg>
<div class="t" style="left:446px;top:216px;font-size:12px;line-height:16px;color:#000;">/</div>
<div style="left:434px;top:232px;width:1px;height:98px;background:repeating-linear-gradient(#a0a0a0 0 1px,transparent 1px 2px)"></div>
<div style="left:436px;top:243px;width:10px;height:1px;background:repeating-linear-gradient(90deg,#a0a0a0 0 1px,transparent 1px 2px)"></div>
<svg style="left:446px;top:234px" width="14" height="16" viewBox="0 0 14 16"><path d="M5 0.5H10.5Q11.5 0.5 11.5 1.5V7H12.5V14.5H6Z" fill="url(#gfb)" stroke="#e2c86c" stroke-width="1"/><path d="M0.5 1.5Q0.5 0.5 1.5 0.5H5L6.5 2V15.5L3.5 14.5H1.5Q0.5 14.5 0.5 13.5Z" fill="url(#gff)" stroke="#e6cc74" stroke-width="1"/><path d="M2.5 1.5V7" stroke="#fffbe8" stroke-width="1.2"/><rect x="11" y="8" width="1" height="2" fill="#eef4fa"/><rect x="11" y="10" width="1" height="3" fill="#3c9ae0"/></svg>
<svg style="left:450px;top:237px" width="6" height="10" viewBox="0 0 6 10"><path fill="#000" d="M1 0H5V1H1Z M0 1H2V3H0Z M4 1H6V4H4Z M3 4H5V5H3Z M2 5H4V7H2Z M2 8H4V10H2Z"/></svg>
<div class="t" style="left:466px;top:234px;font-size:12px;line-height:16px;color:#000;">cache</div>
<div style="left:436px;top:261px;width:10px;height:1px;background:repeating-linear-gradient(90deg,#a0a0a0 0 1px,transparent 1px 2px)"></div>
<svg style="left:446px;top:252px" width="14" height="16" viewBox="0 0 14 16"><path d="M5 0.5H10.5Q11.5 0.5 11.5 1.5V7H12.5V14.5H6Z" fill="url(#gfb)" stroke="#e2c86c" stroke-width="1"/><path d="M0.5 1.5Q0.5 0.5 1.5 0.5H5L6.5 2V15.5L3.5 14.5H1.5Q0.5 14.5 0.5 13.5Z" fill="url(#gff)" stroke="#e6cc74" stroke-width="1"/><path d="M2.5 1.5V7" stroke="#fffbe8" stroke-width="1.2"/><rect x="11" y="8" width="1" height="2" fill="#eef4fa"/><rect x="11" y="10" width="1" height="3" fill="#3c9ae0"/></svg>
<svg style="left:450px;top:255px" width="6" height="10" viewBox="0 0 6 10"><path fill="#000" d="M1 0H5V1H1Z M0 1H2V3H0Z M4 1H6V4H4Z M3 4H5V5H3Z M2 5H4V7H2Z M2 8H4V10H2Z"/></svg>
<div class="t" style="left:466px;top:252px;font-size:12px;line-height:16px;color:#000;">classes</div>
<div style="left:436px;top:279px;width:10px;height:1px;background:repeating-linear-gradient(90deg,#a0a0a0 0 1px,transparent 1px 2px)"></div>
<div style="left:464px;top:269px;width:38px;height:18px;background:#ececec"></div>
<svg style="left:430px;top:275px" width="9" height="9" viewBox="0 0 9 9"><rect x="0.5" y="0.5" width="8" height="8" rx="1" fill="#f2f2f2" stroke="#8e8f8f" stroke-width="1"/><path d="M2 4.5H7" stroke="#2f4f9f" stroke-width="1"/></svg>
<svg style="left:446px;top:270px" width="14" height="16" viewBox="0 0 14 16"><path d="M5 0.5H10.5Q11.5 0.5 11.5 1.5V7H12.5V14.5H6Z" fill="url(#gfb)" stroke="#e2c86c" stroke-width="1"/><path d="M0.5 1.5Q0.5 0.5 1.5 0.5H5L6.5 2V15.5L3.5 14.5H1.5Q0.5 14.5 0.5 13.5Z" fill="url(#gff)" stroke="#e6cc74" stroke-width="1"/><path d="M2.5 1.5V7" stroke="#fffbe8" stroke-width="1.2"/><rect x="11" y="8" width="1" height="2" fill="#eef4fa"/><rect x="11" y="10" width="1" height="3" fill="#3c9ae0"/></svg>
<div class="t" style="left:466px;top:270px;font-size:12px;line-height:16px;color:#000;">config</div>
<div style="left:453px;top:287px;width:1px;height:10px;background:repeating-linear-gradient(#a0a0a0 0 1px,transparent 1px 2px)"></div>
<div style="left:454px;top:297px;width:11px;height:1px;background:repeating-linear-gradient(90deg,#a0a0a0 0 1px,transparent 1px 2px)"></div>
<svg style="left:465px;top:288px" width="14" height="16" viewBox="0 0 14 16"><path d="M5 0.5H10.5Q11.5 0.5 11.5 1.5V7H12.5V14.5H6Z" fill="url(#gfb)" stroke="#e2c86c" stroke-width="1"/><path d="M0.5 1.5Q0.5 0.5 1.5 0.5H5L6.5 2V15.5L3.5 14.5H1.5Q0.5 14.5 0.5 13.5Z" fill="url(#gff)" stroke="#e6cc74" stroke-width="1"/><path d="M2.5 1.5V7" stroke="#fffbe8" stroke-width="1.2"/><rect x="11" y="8" width="1" height="2" fill="#eef4fa"/><rect x="11" y="10" width="1" height="3" fill="#3c9ae0"/></svg>
<svg style="left:469px;top:291px" width="6" height="10" viewBox="0 0 6 10"><path fill="#000" d="M1 0H5V1H1Z M0 1H2V3H0Z M4 1H6V4H4Z M3 4H5V5H3Z M2 5H4V7H2Z M2 8H4V10H2Z"/></svg>
<div class="t" style="left:485px;top:288px;font-size:12px;line-height:16px;color:#000;">xml</div>
<div style="left:436px;top:315px;width:10px;height:1px;background:repeating-linear-gradient(90deg,#a0a0a0 0 1px,transparent 1px 2px)"></div>
<svg style="left:446px;top:306px" width="14" height="16" viewBox="0 0 14 16"><path d="M5 0.5H10.5Q11.5 0.5 11.5 1.5V7H12.5V14.5H6Z" fill="url(#gfb)" stroke="#e2c86c" stroke-width="1"/><path d="M0.5 1.5Q0.5 0.5 1.5 0.5H5L6.5 2V15.5L3.5 14.5H1.5Q0.5 14.5 0.5 13.5Z" fill="url(#gff)" stroke="#e6cc74" stroke-width="1"/><path d="M2.5 1.5V7" stroke="#fffbe8" stroke-width="1.2"/><rect x="11" y="8" width="1" height="2" fill="#eef4fa"/><rect x="11" y="10" width="1" height="3" fill="#3c9ae0"/></svg>
<svg style="left:450px;top:309px" width="6" height="10" viewBox="0 0 6 10"><path fill="#000" d="M1 0H5V1H1Z M0 1H2V3H0Z M4 1H6V4H4Z M3 4H5V5H3Z M2 5H4V7H2Z M2 8H4V10H2Z"/></svg>
<div class="t" style="left:466px;top:306px;font-size:12px;line-height:16px;color:#000;">controllers</div>
<div style="left:0px;top:0px;width:795px;height:330px;overflow:hidden">
<svg style="left:446px;top:324px" width="14" height="16" viewBox="0 0 14 16"><path d="M5 0.5H10.5Q11.5 0.5 11.5 1.5V7H12.5V14.5H6Z" fill="url(#gfb)" stroke="#e2c86c" stroke-width="1"/><path d="M0.5 1.5Q0.5 0.5 1.5 0.5H5L6.5 2V15.5L3.5 14.5H1.5Q0.5 14.5 0.5 13.5Z" fill="url(#gff)" stroke="#e6cc74" stroke-width="1"/><path d="M2.5 1.5V7" stroke="#fffbe8" stroke-width="1.2"/><rect x="11" y="8" width="1" height="2" fill="#eef4fa"/><rect x="11" y="10" width="1" height="3" fill="#3c9ae0"/></svg>
<svg style="left:450px;top:327px" width="6" height="10" viewBox="0 0 6 10"><path fill="#000" d="M1 0H5V1H1Z M0 1H2V3H0Z M4 1H6V4H4Z M3 4H5V5H3Z M2 5H4V7H2Z M2 8H4V10H2Z"/></svg>
</div>
<div style="left:404px;top:330px;width:383px;height:1px;background:#e3e3e3"></div>
<div style="left:771px;top:215px;width:17px;height:115px;background:linear-gradient(90deg,#e3e3e3,#f0f0f0 2px,#f0f0f0 calc(100% - 2px),#eaeaea)"></div>
<svg style="left:776px;top:222px" width="7" height="4" viewBox="0 0 7 4"><path d="M0 4L3.5 0L7 4Z" fill="url(#ga)"/></svg>
<svg style="left:776px;top:320px" width="7" height="4" viewBox="0 0 7 4"><path d="M0 0L3.5 4L7 0Z" fill="url(#ga)"/></svg>
<div style="left:771px;top:233px;width:15px;height:19px;background:linear-gradient(90deg,#f6f6f6 0,#ebebeb 50%,#d9d9dc 50%,#cacace 100%);border:1px solid #979797;border-radius:2px;box-sizing:border-box"></div>
<svg style="left:774px;top:238px" width="9" height="8" viewBox="0 0 9 8"><path d="M1 1.5H8M1 3.5H8M1 5.5H8" stroke="#5a5a5a" stroke-width="1"/><path d="M1 2.5H8M1 4.5H8M1 6.5H8" stroke="#fff" stroke-width="1"/></svg>
<div style="left:402px;top:332px;width:387px;height:4px;background:#f0f0f0"></div>
<div style="left:404px;top:338px;width:383px;height:210px;background:#fff"></div>
<div style="left:402px;top:336px;width:387px;height:1px;background:#a0a0a0"></div>
<div style="left:402px;top:336px;width:1px;height:214px;background:#a0a0a0"></div>
<div style="left:403px;top:337px;width:385px;height:1px;background:#696969"></div>
<div style="left:403px;top:337px;width:1px;height:212px;background:#696969"></div>
<div style="left:402px;top:549px;width:387px;height:1px;background:#ffffff"></div>
<div style="left:788px;top:336px;width:1px;height:214px;background:#ffffff"></div>
<div style="left:403px;top:548px;width:385px;height:1px;background:#e3e3e3"></div>
<div style="left:787px;top:337px;width:1px;height:212px;background:#e3e3e3"></div>
<div style="left:404px;top:338px;width:367px;height:23px;background:linear-gradient(#ffffff 0,#ffffff 9px,#f5f6f8 9px,#eff0f2 calc(100% - 2px),#f6f6f6 calc(100% - 2px));border-bottom:1px solid #d5d5d5;box-sizing:border-box"></div>
<div style="left:573px;top:338px;width:75px;height:23px;background:linear-gradient(#f0f8fd 0,#edf7fc 9px,#dff0fa 9px,#d6ecf8 100%);border:1px solid #8fd0f2;border-top:none;box-sizing:border-box"></div>
<div style="left:727px;top:338px;width:1px;height:22px;background:#e3e4e6"></div>
<svg style="left:605px;top:339px" width="8" height="4" viewBox="0 0 8 4"><path d="M0 0H8L4 4Z" fill="#7cbde6"/></svg>
<div class="t" style="left:410px;top:342px;font-size:12px;line-height:16px;color:#000;">Имя<span style="letter-spacing:-0.5px"> </span>файла</div>
<div class="t" style="left:341px;width:300px;text-align:right;top:342px;font-size:12px;line-height:16px;color:#000;">Размер</div>
<div class="t" style="left:654px;top:342px;font-size:12px;line-height:16px;color:#000;">Тип<span style="letter-spacing:-0.5px"> </span>файла</div>
<div class="t" style="left:734px;top:342px;font-size:12px;line-height:16px;color:#000;width:36px;overflow:hidden;">Последнее</div>
<svg style="left:410px;top:363px" width="13" height="16" viewBox="0 0 13 16"><path d="M0.5 0.5H9.5L12.5 3.5V15.5H0.5Z" fill="url(#gfile)" stroke="#8c8c8c" stroke-width="1"/><path d="M9.5 0.5V3.5H12.5" fill="#fff" stroke="#a8a8a8" stroke-width="1"/></svg>
<div class="t" style="left:426px;top:364px;font-size:12px;line-height:16px;color:#000;">alias.php</div>
<div class="t" style="left:342px;width:300px;text-align:right;top:364px;font-size:12px;line-height:16px;color:#000;"><span style="letter-spacing:-0.7px">2</span><span style="letter-spacing:-0.5px"> </span><span style="letter-spacing:-0.7px">0</span><span style="letter-spacing:-0.7px">7</span><span style="letter-spacing:-0.7px">2</span></div>
<div class="t" style="left:654px;top:364px;font-size:12px;line-height:16px;color:#000;">Файл<span style="letter-spacing:-0.5px"> </span>"PHP"</div>
<div class="t" style="left:734px;top:364px;font-size:12px;line-height:16px;color:#000;width:36px;overflow:hidden;"><span style="letter-spacing:-0.7px">0</span><span style="letter-spacing:-0.7px">4</span>.<span style="letter-spacing:-0.7px">0</span><span style="letter-spacing:-0.7px">6</span>.<span style="letter-spacing:-0.7px">2</span><span style="letter-spacing:-0.7px">0</span><span style="letter-spacing:-0.7px">1</span><span style="letter-spacing:-0.7px">3</span></div>
<svg style="left:410px;top:382px" width="13" height="16" viewBox="0 0 13 16"><path d="M0.5 0.5H9.5L12.5 3.5V15.5H0.5Z" fill="url(#gfile)" stroke="#8c8c8c" stroke-width="1"/><path d="M9.5 0.5V3.5H12.5" fill="#fff" stroke="#a8a8a8" stroke-width="1"/></svg>
<div class="t" style="left:426px;top:383px;font-size:12px;line-height:16px;color:#000;">index.php</div>
<div class="t" style="left:342px;width:300px;text-align:right;top:383px;font-size:12px;line-height:16px;color:#000;"><span style="letter-spacing:-0.7px">1</span><span style="letter-spacing:-0.5px"> </span><span style="letter-spacing:-0.7px">2</span><span style="letter-spacing:-0.7px">6</span><span style="letter-spacing:-0.7px">9</span></div>
<div class="t" style="left:654px;top:383px;font-size:12px;line-height:16px;color:#000;">Файл<span style="letter-spacing:-0.5px"> </span>"PHP"</div>
<div class="t" style="left:734px;top:383px;font-size:12px;line-height:16px;color:#000;width:36px;overflow:hidden;"><span style="letter-spacing:-0.7px">0</span><span style="letter-spacing:-0.7px">4</span>.<span style="letter-spacing:-0.7px">0</span><span style="letter-spacing:-0.7px">6</span>.<span style="letter-spacing:-0.7px">2</span><span style="letter-spacing:-0.7px">0</span><span style="letter-spacing:-0.7px">1</span><span style="letter-spacing:-0.7px">3</span></div>
<svg style="left:410px;top:401px" width="13" height="16" viewBox="0 0 13 16"><path d="M0.5 0.5H9.5L12.5 3.5V15.5H0.5Z" fill="url(#gfile)" stroke="#8c8c8c" stroke-width="1"/><path d="M9.5 0.5V3.5H12.5" fill="#fff" stroke="#a8a8a8" stroke-width="1"/></svg>
<div class="t" style="left:426px;top:402px;font-size:12px;line-height:16px;color:#000;">autoload.php</div>
<div class="t" style="left:342px;width:300px;text-align:right;top:402px;font-size:12px;line-height:16px;color:#000;"><span style="letter-spacing:-0.7px">1</span><span style="letter-spacing:-0.5px"> </span><span style="letter-spacing:-0.7px">1</span><span style="letter-spacing:-0.7px">7</span><span style="letter-spacing:-0.7px">8</span></div>
<div class="t" style="left:654px;top:402px;font-size:12px;line-height:16px;color:#000;">Файл<span style="letter-spacing:-0.5px"> </span>"PHP"</div>
<div class="t" style="left:734px;top:402px;font-size:12px;line-height:16px;color:#000;width:36px;overflow:hidden;"><span style="letter-spacing:-0.7px">0</span><span style="letter-spacing:-0.7px">4</span>.<span style="letter-spacing:-0.7px">0</span><span style="letter-spacing:-0.7px">6</span>.<span style="letter-spacing:-0.7px">2</span><span style="letter-spacing:-0.7px">0</span><span style="letter-spacing:-0.7px">1</span><span style="letter-spacing:-0.7px">3</span></div>
<svg style="left:410px;top:420px" width="13" height="16" viewBox="0 0 13 16"><path d="M0.5 0.5H9.5L12.5 3.5V15.5H0.5Z" fill="url(#gfile)" stroke="#8c8c8c" stroke-width="1"/><path d="M9.5 0.5V3.5H12.5" fill="#fff" stroke="#a8a8a8" stroke-width="1"/></svg>
<div class="t" style="left:426px;top:421px;font-size:12px;line-height:16px;color:#000;">settings.inc.php</div>
<div class="t" style="left:342px;width:300px;text-align:right;top:421px;font-size:12px;line-height:16px;color:#000;"><span style="letter-spacing:-0.7px">7</span><span style="letter-spacing:-0.7px">2</span><span style="letter-spacing:-0.7px">2</span></div>
<div class="t" style="left:654px;top:421px;font-size:12px;line-height:16px;color:#000;">Файл<span style="letter-spacing:-0.5px"> </span>"PHP"</div>
<div class="t" style="left:734px;top:421px;font-size:12px;line-height:16px;color:#000;width:36px;overflow:hidden;"><span style="letter-spacing:-0.7px">0</span><span style="letter-spacing:-0.7px">4</span>.<span style="letter-spacing:-0.7px">0</span><span style="letter-spacing:-0.7px">6</span>.<span style="letter-spacing:-0.7px">2</span><span style="letter-spacing:-0.7px">0</span><span style="letter-spacing:-0.7px">1</span><span style="letter-spacing:-0.7px">3</span></div>
<svg style="left:410px;top:439px" width="13" height="16" viewBox="0 0 13 16"><path d="M0.5 0.5H9.5L12.5 3.5V15.5H0.5Z" fill="url(#gfile)" stroke="#8c8c8c" stroke-width="1"/><path d="M9.5 0.5V3.5H12.5" fill="#fff" stroke="#a8a8a8" stroke-width="1"/></svg>
<div class="t" style="left:426px;top:440px;font-size:12px;line-height:16px;color:#000;">.htaccess</div>
<div class="t" style="left:342px;width:300px;text-align:right;top:440px;font-size:12px;line-height:16px;color:#000;"><span style="letter-spacing:-0.7px">3</span><span style="letter-spacing:-0.7px">1</span></div>
<div class="t" style="left:654px;top:440px;font-size:12px;line-height:16px;color:#000;">Файл<span style="letter-spacing:-0.5px"> </span>"HT...</div>
<div class="t" style="left:734px;top:440px;font-size:12px;line-height:16px;color:#000;width:36px;overflow:hidden;"><span style="letter-spacing:-0.7px">0</span><span style="letter-spacing:-0.7px">4</span>.<span style="letter-spacing:-0.7px">0</span><span style="letter-spacing:-0.7px">6</span>.<span style="letter-spacing:-0.7px">2</span><span style="letter-spacing:-0.7px">0</span><span style="letter-spacing:-0.7px">1</span><span style="letter-spacing:-0.7px">3</span></div>
<div style="left:424px;top:457px;width:347px;height:19px;background:#ededed"></div>
<svg style="left:410px;top:458px" width="13" height="16" viewBox="0 0 13 16"><path d="M0.5 0.5H9.5L12.5 3.5V15.5H0.5Z" fill="#d3e5f9" stroke="#7d97b5" stroke-width="1"/><path d="M9.5 0.5V3.5H12.5" fill="#fff" stroke="#a8a8a8" stroke-width="1"/></svg>
<div class="t" style="left:426px;top:459px;font-size:12px;line-height:16px;color:#000;">defines.inc.php</div>
<div class="t" style="left:342px;width:300px;text-align:right;top:459px;font-size:12px;line-height:16px;color:#000;"><span style="letter-spacing:-0.7px">0</span></div>
<div class="t" style="left:654px;top:459px;font-size:12px;line-height:16px;color:#000;">Файл<span style="letter-spacing:-0.5px"> </span>"PHP"</div>
<div class="t" style="left:734px;top:459px;font-size:12px;line-height:16px;color:#000;width:36px;overflow:hidden;"><span style="letter-spacing:-0.7px">0</span><span style="letter-spacing:-0.7px">4</span>.<span style="letter-spacing:-0.7px">0</span><span style="letter-spacing:-0.7px">8</span>.<span style="letter-spacing:-0.7px">2</span><span style="letter-spacing:-0.7px">0</span><span style="letter-spacing:-0.7px">1</span><span style="letter-spacing:-0.7px">3</span></div>
<svg style="left:409px;top:477px" width="14" height="16" viewBox="0 0 14 16"><path d="M5 0.5H10.5Q11.5 0.5 11.5 1.5V7H12.5V14.5H6Z" fill="url(#gfb)" stroke="#e2c86c" stroke-width="1"/><path d="M0.5 1.5Q0.5 0.5 1.5 0.5H5L6.5 2V15.5L3.5 14.5H1.5Q0.5 14.5 0.5 13.5Z" fill="url(#gff)" stroke="#e6cc74" stroke-width="1"/><path d="M2.5 1.5V7" stroke="#fffbe8" stroke-width="1.2"/><rect x="11" y="8" width="1" height="2" fill="#eef4fa"/><rect x="11" y="10" width="1" height="3" fill="#3c9ae0"/></svg>
<div class="t" style="left:426px;top:478px;font-size:12px;line-height:16px;color:#000;">xml</div>
<div class="t" style="left:654px;top:478px;font-size:12px;line-height:16px;color:#000;">Папка<span style="letter-spacing:-0.5px"> </span>с<span style="letter-spacing:-0.5px"> </span>ф...</div>
<div class="t" style="left:734px;top:478px;font-size:12px;line-height:16px;color:#000;width:36px;overflow:hidden;"><span style="letter-spacing:-0.7px">0</span><span style="letter-spacing:-0.7px">2</span>.<span style="letter-spacing:-0.7px">0</span><span style="letter-spacing:-0.7px">8</span>.<span style="letter-spacing:-0.7px">2</span><span style="letter-spacing:-0.7px">0</span><span style="letter-spacing:-0.7px">1</span><span style="letter-spacing:-0.7px">3</span></div>
<div style="left:771px;top:338px;width:17px;height:170px;background:linear-gradient(90deg,#e3e3e3,#f0f0f0 2px,#f0f0f0 calc(100% - 2px),#eaeaea)"></div>
<svg style="left:776px;top:345px" width="7" height="4" viewBox="0 0 7 4"><path d="M0 4L3.5 0L7 4Z" fill="url(#ga)"/></svg>
<svg style="left:776px;top:498px" width="7" height="4" viewBox="0 0 7 4"><path d="M0 0L3.5 4L7 0Z" fill="url(#ga)"/></svg>
<div style="left:771px;top:419px;width:15px;height:71px;background:linear-gradient(90deg,#f6f6f6 0,#ebebeb 50%,#d9d9dc 50%,#cacace 100%);border:1px solid #979797;border-radius:2px;box-sizing:border-box"></div>
<svg style="left:774px;top:450px" width="9" height="8" viewBox="0 0 9 8"><path d="M1 1.5H8M1 3.5H8M1 5.5H8" stroke="#5a5a5a" stroke-width="1"/><path d="M1 2.5H8M1 4.5H8M1 6.5H8" stroke="#fff" stroke-width="1"/></svg>
<div style="left:404px;top:509px;width:367px;height:16px;background:linear-gradient(#e3e3e3,#f0f0f0 2px,#f0f0f0 14px,#eaeaea)"></div>
<svg style="left:410px;top:513px" width="4" height="7" viewBox="0 0 4 7"><path d="M4 0L0 3.5L4 7Z" fill="url(#ga)"/></svg>
<svg style="left:760px;top:513px" width="4" height="7" viewBox="0 0 4 7"><path d="M0 0L4 3.5L0 7Z" fill="url(#ga)"/></svg>
<div style="left:422px;top:509px;width:187px;height:15px;background:linear-gradient(#f6f6f6 0,#ebebeb 50%,#d9d9dc 50%,#cacace 100%);border:1px solid #979797;border-radius:2px;box-sizing:border-box"></div>
<svg style="left:511px;top:512px" width="8" height="9" viewBox="0 0 8 9"><path d="M1.5 1V8M3.5 1V8M5.5 1V8" stroke="#5a5a5a" stroke-width="1"/><path d="M2.5 1V8M4.5 1V8M6.5 1V8" stroke="#fff" stroke-width="1"/></svg>
<div style="left:771px;top:509px;width:16px;height:16px;background:#f0f0f0"></div>
<div style="left:404px;top:525px;width:383px;height:1px;background:#a0a0a0"></div>
<div style="left:404px;top:526px;width:383px;height:1px;background:#ffffff"></div>
<div style="left:404px;top:527px;width:383px;height:21px;background:#efecec"></div>
<div style="left:404px;top:547px;width:383px;height:1px;background:#ffffff"></div>
<div class="t" style="left:406px;top:530px;font-size:12px;line-height:16px;color:#000;">Выбран<span style="letter-spacing:-0.5px"> </span><span style="letter-spacing:-0.7px">1</span><span style="letter-spacing:-0.5px"> </span>файл.<span style="letter-spacing:-0.5px"> </span>Размер:<span style="letter-spacing:-0.5px"> </span><span style="letter-spacing:-0.7px">0</span><span style="letter-spacing:-0.5px"> </span>байт</div>
<div style="left:402px;top:550px;width:387px;height:1px;background:#a0a0a0"></div>
<div style="left:6px;top:551px;width:783px;height:4px;background:#f0f0f0"></div>
<div style="left:6px;top:555px;width:784px;height:146px;background:#fff;border:1px solid #828790;box-sizing:border-box"></div>
<div style="left:8px;top:557px;width:764px;height:23px;background:linear-gradient(#ffffff 0,#ffffff 9px,#f5f6f8 9px,#eff0f2 calc(100% - 2px),#f6f6f6 calc(100% - 2px));border-bottom:1px solid #d5d5d5;box-sizing:border-box"></div>
<div style="left:284px;top:557px;width:1px;height:22px;background:#e3e4e6"></div>
<div style="left:343px;top:557px;width:1px;height:22px;background:#e3e4e6"></div>
<div style="left:489px;top:557px;width:1px;height:22px;background:#e3e4e6"></div>
<div style="left:569px;top:557px;width:1px;height:22px;background:#e3e4e6"></div>
<div style="left:646px;top:557px;width:1px;height:22px;background:#e3e4e6"></div>
<div style="left:771px;top:557px;width:1px;height:22px;background:#e3e4e6"></div>
<div class="t" style="left:15px;top:561px;font-size:12px;line-height:16px;color:#000;">Сервер/Локальный<span style="letter-spacing:-0.5px"> </span>файл</div>
<div class="t" style="left:292px;top:561px;font-size:12px;line-height:16px;color:#000;">Напра...</div>
<div class="t" style="left:350px;top:561px;font-size:12px;line-height:16px;color:#000;">Файл<span style="letter-spacing:-0.5px"> </span>на<span style="letter-spacing:-0.5px"> </span>сервере</div>
<div class="t" style="left:264px;width:300px;text-align:right;top:561px;font-size:12px;line-height:16px;color:#000;">Размер</div>
<div class="t" style="left:576px;top:561px;font-size:12px;line-height:16px;color:#000;">Приоритет</div>
<div class="t" style="left:652px;top:561px;font-size:12px;line-height:16px;color:#000;">Time</div>
<svg style="left:14px;top:582px" width="12" height="16" viewBox="0 0 12 16"><defs><linearGradient id="gs" x1="0" x2="1"><stop offset="0" stop-color="#a8c8ee"/><stop offset="0.45" stop-color="#c4e4f6"/><stop offset="0.5" stop-color="#7694d4"/><stop offset="0.55" stop-color="#c4e4f6"/><stop offset="1" stop-color="#98b8e8"/></linearGradient><linearGradient id="gsb" x1="0" x2="1"><stop offset="0" stop-color="#8aa0c0" stop-opacity="0.5"/><stop offset="0.3" stop-color="#2a4a80"/><stop offset="0.7" stop-color="#2a4a80"/><stop offset="1" stop-color="#8aa0c0" stop-opacity="0.5"/></linearGradient></defs><rect x="2.5" y="0.5" width="7" height="12" fill="url(#gs)" stroke="#6a86b8" stroke-width="1"/><rect x="5" y="13" width="2" height="1" fill="#3a5a90"/><rect x="0" y="14" width="12" height="2" fill="url(#gsb)"/></svg>
<div class="t" style="left:30px;top:583px;font-size:12px;line-height:16px;color:#000;">shopping_<span style="letter-spacing:-0.7px">2</span>@<span style="letter-spacing:-0.7px">2</span><span style="letter-spacing:-0.7px">1</span><span style="letter-spacing:-0.7px">3</span>.<span style="letter-spacing:-0.7px">1</span><span style="letter-spacing:-0.7px">3</span><span style="letter-spacing:-0.7px">3</span>.<span style="letter-spacing:-0.7px">1</span><span style="letter-spacing:-0.7px">2</span><span style="letter-spacing:-0.7px">1</span>.<span style="letter-spacing:-0.7px">4</span><span style="letter-spacing:-0.7px">4</span></div>
<div style="left:13px;top:601px;width:13px;height:16px;background:linear-gradient(135deg,#f6f6f6,#f0f0f0);border:1px solid #8e8e8e;box-shadow:inset 0 0 0 1px #fff;box-sizing:border-box"></div>
<div class="t" style="left:36px;top:602px;font-size:12px;line-height:16px;color:#000;">C:\Users\Саша\AppData\Local\Temp\fz<span style="letter-spacing:-0.7px">3</span>te...</div>
<div class="t" style="left:302px;top:602px;font-size:12px;line-height:16px;color:#000;letter-spacing:1.1px;">&lt;&lt;--</div>
<div class="t" style="left:350px;top:602px;font-size:12px;line-height:16px;color:#000;letter-spacing:0.22px;">/config/defines.inc.php</div>
<div class="t" style="left:264px;width:300px;text-align:right;top:602px;font-size:12px;line-height:16px;color:#000;"><span style="letter-spacing:-0.7px">0</span></div>
<div class="t" style="left:576px;top:602px;font-size:12px;line-height:16px;color:#000;">Нормаль...</div>
<div class="t" style="left:652px;top:602px;font-size:12px;line-height:16px;color:#000;"><span style="letter-spacing:-0.7px">0</span><span style="letter-spacing:-0.7px">4</span>.<span style="letter-spacing:-0.7px">0</span><span style="letter-spacing:-0.7px">8</span>.<span style="letter-spacing:-0.7px">2</span><span style="letter-spacing:-0.7px">0</span><span style="letter-spacing:-0.7px">1</span><span style="letter-spacing:-0.7px">3</span><span style="letter-spacing:-0.5px"> </span><span style="letter-spacing:-0.7px">1</span><span style="letter-spacing:-0.7px">1</span>:<span style="letter-spacing:-0.7px">3</span><span style="letter-spacing:-0.7px">1</span>:<span style="letter-spacing:-0.7px">5</span><span style="letter-spacing:-0.7px">6</span></div>
<div style="left:13px;top:620px;width:13px;height:16px;background:linear-gradient(135deg,#f6f6f6,#f0f0f0);border:1px solid #8e8e8e;box-shadow:inset 0 0 0 1px #fff;box-sizing:border-box"></div>
<div class="t" style="left:36px;top:621px;font-size:12px;line-height:16px;color:#000;">C:\Users\Саша\AppData\Local\Temp\fz<span style="letter-spacing:-0.7px">3</span>te...</div>
<div class="t" style="left:302px;top:621px;font-size:12px;line-height:16px;color:#000;letter-spacing:1.1px;">--&gt;&gt;</div>
<div class="t" style="left:350px;top:621px;font-size:12px;line-height:16px;color:#000;letter-spacing:0.22px;">/config/defines.inc.php</div>
<div class="t" style="left:264px;width:300px;text-align:right;top:621px;font-size:12px;line-height:16px;color:#000;"><span style="letter-spacing:-0.7px">5</span><span style="letter-spacing:-0.5px"> </span><span style="letter-spacing:-0.7px">9</span><span style="letter-spacing:-0.7px">4</span><span style="letter-spacing:-0.7px">7</span></div>
<div class="t" style="left:576px;top:621px;font-size:12px;line-height:16px;color:#000;">Нормаль...</div>
<div class="t" style="left:652px;top:621px;font-size:12px;line-height:16px;color:#000;"><span style="letter-spacing:-0.7px">0</span><span style="letter-spacing:-0.7px">4</span>.<span style="letter-spacing:-0.7px">0</span><span style="letter-spacing:-0.7px">8</span>.<span style="letter-spacing:-0.7px">2</span><span style="letter-spacing:-0.7px">0</span><span style="letter-spacing:-0.7px">1</span><span style="letter-spacing:-0.7px">3</span><span style="letter-spacing:-0.5px"> </span><span style="letter-spacing:-0.7px">1</span><span style="letter-spacing:-0.7px">1</span>:<span style="letter-spacing:-0.7px">3</span><span style="letter-spacing:-0.7px">2</span>:<span style="letter-spacing:-0.7px">5</span><span style="letter-spacing:-0.7px">4</span></div>
<div style="left:13px;top:639px;width:13px;height:16px;background:linear-gradient(135deg,#f6f6f6,#f0f0f0);border:1px solid #8e8e8e;box-shadow:inset 0 0 0 1px #fff;box-sizing:border-box"></div>
<div class="t" style="left:36px;top:640px;font-size:12px;line-height:16px;color:#000;">C:\Users\Саша\Desktop\Сайт\defines.inc.php</div>
<div class="t" style="left:302px;top:640px;font-size:12px;line-height:16px;color:#000;letter-spacing:1.1px;">&lt;&lt;--</div>
<div class="t" style="left:350px;top:640px;font-size:12px;line-height:16px;color:#000;letter-spacing:0.22px;">/config/defines.inc.php</div>
<div class="t" style="left:264px;width:300px;text-align:right;top:640px;font-size:12px;line-height:16px;color:#000;"><span style="letter-spacing:-0.7px">0</span></div>
<div class="t" style="left:576px;top:640px;font-size:12px;line-height:16px;color:#000;">Нормаль...</div>
<div class="t" style="left:652px;top:640px;font-size:12px;line-height:16px;color:#000;"><span style="letter-spacing:-0.7px">0</span><span style="letter-spacing:-0.7px">4</span>.<span style="letter-spacing:-0.7px">0</span><span style="letter-spacing:-0.7px">8</span>.<span style="letter-spacing:-0.7px">2</span><span style="letter-spacing:-0.7px">0</span><span style="letter-spacing:-0.7px">1</span><span style="letter-spacing:-0.7px">3</span><span style="letter-spacing:-0.5px"> </span><span style="letter-spacing:-0.7px">1</span><span style="letter-spacing:-0.7px">1</span>:<span style="letter-spacing:-0.7px">3</span><span style="letter-spacing:-0.7px">6</span>:<span style="letter-spacing:-0.7px">2</span><span style="letter-spacing:-0.7px">5</span></div>
<div style="left:13px;top:658px;width:13px;height:16px;background:linear-gradient(135deg,#f6f6f6,#f0f0f0);border:1px solid #8e8e8e;box-shadow:inset 0 0 0 1px #fff;box-sizing:border-box"></div>
<div class="t" style="left:36px;top:659px;font-size:12px;line-height:16px;color:#000;">C:\Users\Саша\Desktop\Сайт\_\config\defi...</div>
<div class="t" style="left:302px;top:659px;font-size:12px;line-height:16px;color:#000;letter-spacing:1.1px;">--&gt;&gt;</div>
<div class="t" style="left:350px;top:659px;font-size:12px;line-height:16px;color:#000;letter-spacing:0.22px;">/config/defines.inc.php</div>
<div class="t" style="left:264px;width:300px;text-align:right;top:659px;font-size:12px;line-height:16px;color:#000;"><span style="letter-spacing:-0.7px">5</span><span style="letter-spacing:-0.5px"> </span><span style="letter-spacing:-0.7px">9</span><span style="letter-spacing:-0.7px">4</span><span style="letter-spacing:-0.7px">9</span></div>
<div class="t" style="left:576px;top:659px;font-size:12px;line-height:16px;color:#000;">Нормаль...</div>
<div class="t" style="left:652px;top:659px;font-size:12px;line-height:16px;color:#000;"><span style="letter-spacing:-0.7px">0</span><span style="letter-spacing:-0.7px">4</span>.<span style="letter-spacing:-0.7px">0</span><span style="letter-spacing:-0.7px">8</span>.<span style="letter-spacing:-0.7px">2</span><span style="letter-spacing:-0.7px">0</span><span style="letter-spacing:-0.7px">1</span><span style="letter-spacing:-0.7px">3</span><span style="letter-spacing:-0.5px"> </span><span style="letter-spacing:-0.7px">1</span><span style="letter-spacing:-0.7px">1</span>:<span style="letter-spacing:-0.7px">4</span><span style="letter-spacing:-0.7px">1</span>:<span style="letter-spacing:-0.7px">5</span><span style="letter-spacing:-0.7px">8</span></div>
<div style="left:13px;top:677px;width:13px;height:16px;background:linear-gradient(135deg,#f6f6f6,#f0f0f0);border:1px solid #8e8e8e;box-shadow:inset 0 0 0 1px #fff;box-sizing:border-box"></div>
<div class="t" style="left:36px;top:678px;font-size:12px;line-height:16px;color:#000;">C:\Users\Саша\AppData\Local\Temp\fz<span style="letter-spacing:-0.7px">3</span>te...</div>
<div class="t" style="left:302px;top:678px;font-size:12px;line-height:16px;color:#000;letter-spacing:1.1px;">&lt;&lt;--</div>
<div class="t" style="left:350px;top:678px;font-size:12px;line-height:16px;color:#000;letter-spacing:0.22px;">/config/defines.inc.php</div>
<div class="t" style="left:264px;width:300px;text-align:right;top:678px;font-size:12px;line-height:16px;color:#000;"><span style="letter-spacing:-0.7px">0</span></div>
<div class="t" style="left:576px;top:678px;font-size:12px;line-height:16px;color:#000;">Нормаль...</div>
<div class="t" style="left:652px;top:678px;font-size:12px;line-height:16px;color:#000;"><span style="letter-spacing:-0.7px">0</span><span style="letter-spacing:-0.7px">4</span>.<span style="letter-spacing:-0.7px">0</span><span style="letter-spacing:-0.7px">8</span>.<span style="letter-spacing:-0.7px">2</span><span style="letter-spacing:-0.7px">0</span><span style="letter-spacing:-0.7px">1</span><span style="letter-spacing:-0.7px">3</span><span style="letter-spacing:-0.5px"> </span><span style="letter-spacing:-0.7px">1</span><span style="letter-spacing:-0.7px">1</span>:<span style="letter-spacing:-0.7px">4</span><span style="letter-spacing:-0.7px">6</span>:<span style="letter-spacing:-0.7px">0</span><span style="letter-spacing:-0.7px">0</span></div>
<div style="left:772px;top:557px;width:16px;height:125px;background:linear-gradient(90deg,#e3e3e3,#f0f0f0 2px,#f0f0f0 calc(100% - 2px),#eaeaea)"></div>
<svg style="left:777px;top:564px" width="7" height="4" viewBox="0 0 7 4"><path d="M0 4L3.5 0L7 4Z" fill="url(#ga)"/></svg>
<svg style="left:777px;top:672px" width="7" height="4" viewBox="0 0 7 4"><path d="M0 0L3.5 4L7 0Z" fill="url(#ga)"/></svg>
<div style="left:772px;top:575px;width:15px;height:74px;background:linear-gradient(90deg,#f6f6f6 0,#ebebeb 50%,#d9d9dc 50%,#cacace 100%);border:1px solid #979797;border-radius:2px;box-sizing:border-box"></div>
<svg style="left:775px;top:608px" width="9" height="8" viewBox="0 0 9 8"><path d="M1 1.5H8M1 3.5H8M1 5.5H8" stroke="#5a5a5a" stroke-width="1"/><path d="M1 2.5H8M1 4.5H8M1 6.5H8" stroke="#fff" stroke-width="1"/></svg>
<div style="left:8px;top:683px;width:764px;height:16px;background:linear-gradient(#e3e3e3,#f0f0f0 2px,#f0f0f0 14px,#eaeaea)"></div>
<svg style="left:14px;top:687px" width="4" height="7" viewBox="0 0 4 7"><path d="M4 0L0 3.5L4 7Z" fill="url(#ga)"/></svg>
<svg style="left:761px;top:687px" width="4" height="7" viewBox="0 0 4 7"><path d="M0 0L4 3.5L0 7Z" fill="url(#ga)"/></svg>
<div style="left:26px;top:683px;width:699px;height:15px;background:linear-gradient(#f6f6f6 0,#ebebeb 50%,#d9d9dc 50%,#cacace 100%);border:1px solid #979797;border-radius:2px;box-sizing:border-box"></div>
<svg style="left:371px;top:686px" width="8" height="9" viewBox="0 0 8 9"><path d="M1.5 1V8M3.5 1V8M5.5 1V8" stroke="#5a5a5a" stroke-width="1"/><path d="M2.5 1V8M4.5 1V8M6.5 1V8" stroke="#fff" stroke-width="1"/></svg>
<div style="left:772px;top:683px;width:16px;height:16px;background:#f0f0f0"></div>
<div style="left:6px;top:701px;width:784px;height:1px;background:#e0e0e0"></div>
<div style="left:6px;top:702px;width:784px;height:2px;background:#ffffff"></div>
<div style="left:6px;top:704px;width:784px;height:1px;background:#a0a0a0"></div>
<div style="left:6px;top:705px;width:784px;height:18px;background:linear-gradient(#dedede,#ececec)"></div>
<div style="left:6px;top:701px;width:1px;height:22px;background:#a0a0a0"></div>
<div style="left:11px;top:705px;width:137px;height:18px;background:linear-gradient(#f2f2f2,#ebebeb);border:1px solid #a0a0a0;border-top:none;border-radius:0 0 3px 3px;box-sizing:border-box"></div>
<div class="t" style="left:18px;top:706px;font-size:11px;line-height:13px;color:#000;">Файлы в задании</div>
<div style="left:147px;top:705px;width:177px;height:18px;background:linear-gradient(#f2f2f2,#ebebeb);border:1px solid #a0a0a0;border-top:none;border-radius:0 0 3px 3px;box-sizing:border-box"></div>
<div class="t" style="left:154px;top:706px;font-size:11px;line-height:13px;color:#000;">Неудавшиеся передачи (2)</div>
<div style="left:323px;top:704px;width:158px;height:19px;background:linear-gradient(#fdfdfd,#f6f6f6);border:1px solid #a0a0a0;border-top:none;border-radius:0 0 3px 3px;box-sizing:border-box"></div>
<div class="t" style="left:331px;top:706px;font-size:11px;line-height:13px;color:#000;font-weight:bold;letter-spacing:0.75px">Успешные передачи (5)</div>
</body></html>
